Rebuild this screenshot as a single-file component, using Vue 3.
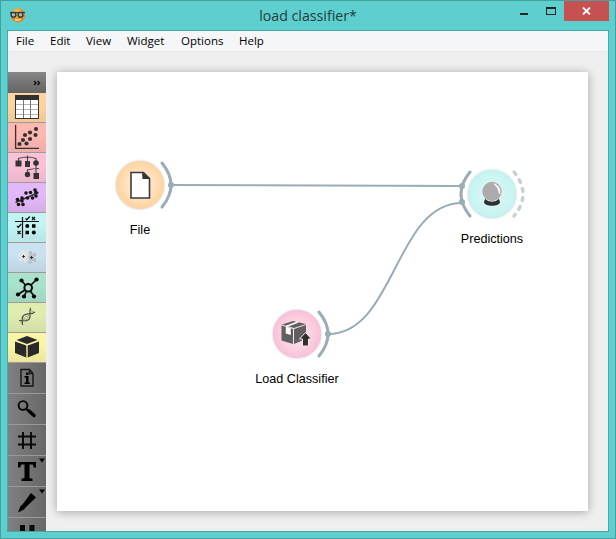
<script setup>
const menus = [
  { name: 'File', w: 34 }, { name: 'Edit', w: 36 }, { name: 'View', w: 41 },
  { name: 'Widget', w: 54 }, { name: 'Options', w: 58 }, { name: 'Help', w: 40 },
]
const scatter = [[11.5, 21], [15, 17], [18.5, 20.5], [17, 12], [22, 16], [22, 9.5], [27.5, 12], [28, 6]]
const cloud = [[9.5, 16.5], [10.5, 21.5], [15, 21.5], [14, 15], [14, 18], [18, 10], [19.5, 15], [22.5, 9.5], [24.5, 15], [27, 7], [28, 13], [28, 9.5]]
const net = [[13.5, 7.5], [28.5, 6.5], [10, 21.5], [16, 23.5], [26, 23.5]]
</script>

<template>
  <div class="window">
    <header class="titlebar">
      <svg class="logo" width="17" height="15" viewBox="0 0 17 15">
        <defs><radialGradient id="face" cx=".4" cy=".3"><stop offset="0" stop-color="#ffd05c" /><stop offset="1" stop-color="#e9831b" /></radialGradient></defs>
        <circle cx="9" cy="7.3" r="7.1" fill="url(#face)" />
        <path d="M1 4.5h15" stroke="#343b3e" stroke-width="1.2" />
        <circle cx="4.5" cy="6.8" r="2.4" fill="#a9bcbd" stroke="#30383d" stroke-width="1.4" />
        <circle cx="11.5" cy="6.8" r="2.4" fill="#a9bcbd" stroke="#30383d" stroke-width="1.4" />
        <path d="M6 11.500q3 1.500 6-.5" fill="none" stroke="#ffe9a5" stroke-width="1.400" />
      </svg>
      <h1>load classifier*</h1>
      <div class="controls">
        <span class="min"></span><span class="max"></span>
        <button class="close"><svg width="9" height="8" viewBox="0 0 9 8"><path d="M1 .5 8 7.500M8 .5 1 7.500" stroke="#fff" stroke-width="1.800" /></svg></button>
      </div>
    </header>
    <div class="client">
      <nav class="menubar"><span v-for="m in menus" :key="m.name" :style="{ width: m.w + 'px' }">{{ m.name }}</span></nav>
      <div class="workspace">
        <aside class="dock">
          <div class="expand"><svg width="38" height="21" viewBox="0 0 38 21"><path d="M26 9l2 2-2 2M29.500 9l2 2-2 2" fill="none" stroke="#101010" stroke-width="1.400" /></svg></div>
          <div class="cell data"><svg viewBox="0 0 38 29">
            <rect x="7.500" y="2.500" width="23" height="23" fill="#fff" stroke="#333" />
            <path d="M8 11.500h22M8 16.500h22M8 21.500h22" stroke="#b5b5b5" />
            <path d="M15.500 7v18M22.500 7v18" stroke="#777" /><path d="M7 2h24v5H7z" fill="#303030" />
          </svg></div>
          <div class="cell visual"><svg viewBox="0 0 38 29">
            <path d="M7.600 2v23.300H31" fill="none" stroke="#333" stroke-width="1.300" />
            <circle v-for="(p, i) in scatter" :key="i" :cx="p[0]" :cy="p[1]" r="2.100" fill="#333" />
          </svg></div>
          <div class="cell model"><svg viewBox="0 0 38 29">
            <path d="M10.500 8V5.500Q19 2.500 28 5.500v3M19.500 2.500v6M28 9v12M19.500 21v-4Q24 15.500 31 15.500" fill="none" stroke="#444" stroke-width="1.100" />
            <path d="M7.500 7.500h6v6h-6zM17 8h5v6H17zM25.500 20h5.500v6h-5.500z" fill="#333" /><circle cx="28" cy="10" r="2.800" fill="#333" /><circle cx="19.500" cy="21.500" r="2.700" fill="#333" />
          </svg></div>
          <div class="cell regression"><svg viewBox="0 0 38 29">
            <path d="M7.500 19.500 30.500 9.500" stroke="#333" stroke-width="1.600" />
            <circle v-for="(p, i) in cloud" :key="i" :cx="p[0]" :cy="p[1]" r="1.800" fill="#151515" />
          </svg></div>
          <div class="cell evaluate"><svg viewBox="0 0 38 29">
            <path d="M14.500 4v21M7 8.500h24" stroke="#181818" stroke-width="1.200" />
            <path d="M17.500 5.500l1.300 1.300 3-3.300M24 4l3 3M27 4 24 7M9 13l1.300 1.300 3-3.300M9.500 18l3 3M12.500 18l-3 3" fill="none" stroke="#151515" stroke-width="1.300" />
            <circle cx="19.300" cy="13" r="2" /><path d="M24 11.200h3.500v3.500H24zM17.500 17.800H21v3.500h-3.500z" /><circle cx="25.800" cy="19.500" r="2" />
          </svg></div>
          <div class="cell unsupervised"><svg viewBox="0 0 38 29">
            <g fill="#e4e4e4"><circle cx="15.500" cy="13.500" r="3.500" /><circle cx="15" cy="9" r="1.700" /><circle cx="12" cy="12" r="1.700" /><circle cx="12.500" cy="17" r="1.800" /><circle cx="17" cy="18" r="1.800" /><circle cx="18.500" cy="9.500" r="1.700" /></g>
            <g fill="#b9bfc2"><circle cx="23.500" cy="14.500" r="3" /><circle cx="22.500" cy="10" r="1.900" /><circle cx="26.500" cy="11.500" r="1.800" /><circle cx="26.500" cy="17" r="1.900" /><circle cx="22" cy="19" r="1.800" /></g>
            <path d="M14 13.500h3M15.500 12v3M22 14.500h3M23.500 13v3" stroke="#263442" />
          </svg></div>
          <div class="cell network"><svg viewBox="0 0 38 29">
            <path d="M13.500 7.500 20 15 28.500 6.500M20 15 10 21.500M20 15l-4 8.500M20 15l6 8" fill="none" stroke="#080808" stroke-width="1.600" />
            <circle v-for="(p, i) in net" :key="i" :cx="p[0]" :cy="p[1]" r="2.100" /><circle cx="20.200" cy="14.800" r="3.800" fill="#a9dfcc" stroke="#080808" stroke-width="2" />
          </svg></div>
          <div class="cell bio"><svg viewBox="0 0 38 29">
            <path d="M11 17.500C16 17.500 20 19 21.500 15.500S21 9 22.500 5M14.500 22C14.500 17 13 13 17 11.500S23 12 27 9" fill="none" stroke="#4b4d43" stroke-width="1.200" />
            <path d="M15 14l5 3.500M16.500 12l5 3.500M19 11.500l3 2.500M12 17.500l2 3M23 7l3 2.500M15 16l3 2" stroke="#858b72" stroke-width=".8" />
          </svg></div>
          <div class="cell bundle"><svg viewBox="0 0 38 29">
            <path d="M7 8.500 18.300 12.500v12L7 20zM19.700 12.500 31 8.500V20l-11.300 4.500zM8.500 7 19 3l10.500 4L19 11z" fill="#292929" />
          </svg></div>
          <div class="cell tool"><svg viewBox="0 0 38 30">
            <path d="M13 6.500h8.500l3.500 4V23H13zM21.500 6.500v4H25" fill="none" stroke="#161616" stroke-width="1.400" />
            <path d="M18 9.500h2.500V12H18zM16.500 13h4v6.500H22V21h-5.500v-1.500H18v-5h-1.500z" />
          </svg></div>
          <div class="cell tool"><svg viewBox="0 0 38 30"><circle cx="15" cy="11.500" r="4.400" fill="none" stroke="#050505" stroke-width="1.900" /><path d="M18.500 15l2 2" stroke="#000" stroke-width="2" /><path d="M21 17l5 4.500" stroke="#000" stroke-width="3.400" stroke-linecap="round" /></svg></div>
          <div class="cell tool"><svg viewBox="0 0 38 30"><path d="M15 7v17M23 7v17M10 11.500h18M10 19.500h18" stroke="#080808" stroke-width="1.900" /></svg></div>
          <div class="cell tool"><svg viewBox="0 0 38 30"><path d="M10 6h18v5.500h-2.200l-1-3H21.500v13.500l3 .7v2.300h-11v-2.300l3-.7V8.500h-3.300l-1 3H10z" /><path d="M31 2.500h6l-3 4z" /></svg></div>
          <div class="cell tool"><svg viewBox="0 0 38 30"><path d="M23 6 28 10.500 17.500 20.500 16 22.500 10 25.500 12.500 19 14.500 17.500z" /><path d="M31 2.500h6l-3 4z" /></svg></div>
          <div class="cell tool last"><svg viewBox="0 0 38 13"><path d="M12 7h5v7h-5zM21.500 7h5v7h-5z" fill="#090909" /></svg></div>
        </aside>
        <main class="canvas">
          <svg width="531" height="439" viewBox="57 72 531 439">
            <defs>
              <radialGradient id="orange"><stop offset="0" stop-color="#fff4e6" /><stop offset="1" stop-color="#ffd39f" /></radialGradient>
              <radialGradient id="cyan"><stop offset="0" stop-color="#e4f8f7" /><stop offset="1" stop-color="#c3f3f0" /></radialGradient>
              <radialGradient id="pink"><stop offset="0" stop-color="#fdeaf2" /><stop offset="1" stop-color="#fac0d9" /></radialGradient>
              <filter id="glow" x="-20%" y="-20%" width="140%" height="140%"><feDropShadow dx="0" dy="0" stdDeviation="1.100" flood-color="#8b9da5" flood-opacity=".6" /></filter>
            </defs>
            <g class="link"><path d="M171 185 462 186" /><path d="M328 334C395 334 395 203 462 203" /></g>
            <g class="anchor"><path d="M162 163Q180 185 162 207" /><path d="M470 172Q452 194 470 216" /><path d="M319 312Q337 334 319 356" /></g>
            <path class="anchor empty" d="M514 172Q532 194 514 216" />
            <g fill="#9aacb5"><circle cx="171" cy="185" r="3" /><circle cx="462" cy="186" r="3" /><circle cx="462" cy="202" r="3" /><circle cx="328" cy="334" r="3" /></g>
            <g filter="url(#glow)"><circle cx="140" cy="185" r="24" fill="url(#orange)" /><circle cx="492" cy="194" r="24" fill="url(#cyan)" /><circle cx="297" cy="334" r="24" fill="url(#pink)" /></g>
            <path d="M131 172.500h12.500l6 6V198H131z" fill="#fff" stroke="#3a3a3a" stroke-width="1.600" /><path d="M142 172l8 7h-7.500z" fill="#333" />
            <path d="M485 199h14l1 3c0 5-16 5-16 0z" fill="#303030" /><circle cx="492" cy="191.500" r="10.200" fill="#e8eeee" /><circle cx="492" cy="191.500" r="9.700" fill="#acacac" /><path d="M494 183.800Q501 186.500 499.800 194Q498.500 187.500 494 183.800" fill="#fff" stroke="#fff" stroke-width=".8" />
            <path d="M281.500 325.500 293 329v15l-11.500-3.500zM294 329l12-4v14l-12 5zM282 324.500 293 321l13 3-12 4z" fill="#606060" />
            <path d="M286 326.500 298 322M286.500 327v6l3.500 1v-6" fill="#fff" stroke="#fff" stroke-width="1.500" />
            <path d="M305.500 332.500l6 6.500h-3v7h-6v-7h-3z" fill="#303030" stroke="#fce5ee" stroke-width="1" />
            <g class="label"><text x="140" y="234">File</text><text x="492" y="243">Predictions</text><text x="297" y="383">Load Classifier</text></g>
          </svg>
        </main>
      </div>
    </div>
  </div>
</template>

<style>
body { margin: 0; overflow: hidden; }
</style>
<style scoped>
.window { box-sizing: border-box; width: 616px; height: 539px; background: #5dcfcf; border: 1px solid #489fa0; padding: 0 6px 6px; font-family: "Open Sans", sans-serif; }
.titlebar { height: 29px; display: grid; grid-template-columns: 160px 1fr 160px; align-items: start; }
.logo { margin: 7px 0 0 2px; }
h1 { margin: 4px 0 0; text-align: center; font-size: 14.2px; line-height: 22px; font-weight: 400; color: #253c3d; white-space: nowrap; }
.controls { display: flex; justify-content: flex-end; align-items: flex-start; }
.min { width: 8px; height: 2px; background: #252525; margin: 12px 18px 0 0; }
.max { box-sizing: border-box; width: 10px; height: 8px; border: 1px solid #252525; border-top-width: 2px; margin: 6px 8px 0 0; }
.close { width: 45px; height: 20px; padding: 0; border: 0; background: #c75050; display: flex; align-items: center; justify-content: center; }
.client { box-sizing: border-box; width: 602px; height: 502px; border: 1px solid #43a8a8; background: #efefef; }
.menubar { box-sizing: border-box; height: 21px; padding-left: 8px; display: flex; background: #f5f6f8; border-bottom: 1px solid #e7e8ea; font-size: 11.5px; line-height: 20px; color: #000; }
.workspace { height: 479px; display: flex; padding-top: 20px; box-sizing: border-box; }
.dock { width: 38px; height: 459px; overflow: hidden; display: flex; flex-direction: column; }
.expand { height: 21px; flex: none; background: linear-gradient(#868686, #646464); }
.cell { box-sizing: border-box; height: 30px; flex: none; border-bottom: 1px solid #a09a9a; background-image: linear-gradient(transparent 40%, rgba(0, 0, 0, .06)); }
svg { display: block; }
.cell svg { width: 38px; height: 29px; }
.data { background-color: #ffd39f; }
.visual { background-color: #ffb7b1; }
.model { background-color: #fac1d9; }
.regression { background-color: #e3b8f8; }
.evaluate { background-color: #c3f3f3; }
.unsupervised { background-color: #cae1ef; }
.network { background-color: #a9e2cd; }
.bio { background-color: #dfecb0; }
.bundle { background-color: #faf4a5; }
.tool { height: 31px; background: linear-gradient(90deg, #808080, #686868); border-color: #999; }
.tool svg { height: 30px; }
.last { height: 14px; border: 0; }
.last svg { height: 13px; }
.canvas { margin-left: 11px; width: 531px; height: 439px; background: #fff; box-shadow: 0 1px 9px rgba(0, 0, 0, .32); }
.link { fill: none; stroke: #9aacb5; stroke-width: 2; }
.anchor { fill: none; stroke: #9aacb5; stroke-width: 3; stroke-linecap: round; }
.empty { stroke: #c8d0d4; stroke-width: 3.4; stroke-dasharray: 3 6.3; }
.label { font-family: "Liberation Sans", sans-serif; font-size: 12.6px; text-anchor: middle; fill: #000; }
</style>
